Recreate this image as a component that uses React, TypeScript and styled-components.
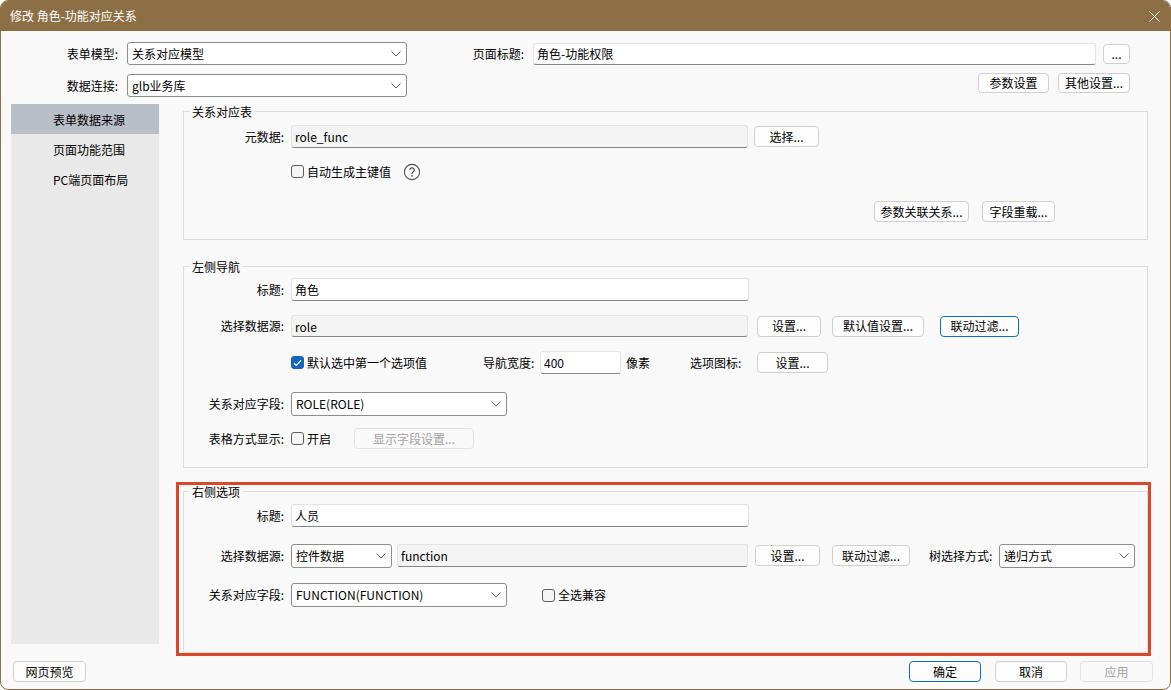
import React from 'react';
import styled, { createGlobalStyle } from 'styled-components';

const GlobalStyle = createGlobalStyle`
	* {
		box-sizing: border-box;
	}
	html,
	body {
		margin: 0;
		padding: 0;
		background: #ffffff;
	}
	body {
		font-family: 'Noto Sans CJK SC', 'Noto Sans', sans-serif;
		font-size: 12px;
		color: #000;
	}
`;

const Window = styled.div`
	width: 1171px;
	height: 690px;
	display: flex;
	flex-direction: column;
	background: #f9f9f9;
	border: 1px solid #8c6f45;
	border-radius: 8px;
	overflow: hidden;
`;

const TitleBar = styled.div`
	height: 30px;
	flex-shrink: 0;
	display: flex;
	align-items: center;
	justify-content: space-between;
	padding: 0 10px 0 9px;
	background: #8c6f45;
	color: #fff;
	line-height: 16px;
`;

const Body = styled.div`
	flex: 1;
	display: flex;
	flex-direction: column;
	min-height: 0;
`;

const TopRow = styled.div<{ $mt: number; $h: number }>`
	display: flex;
	align-items: center;
	height: ${(p) => p.$h}px;
	margin-top: ${(p) => p.$mt}px;
	padding-right: 40px;
`;

const TopLabel = styled.label`
	width: 117px;
	margin-right: 9px;
	text-align: right;
	flex-shrink: 0;
	line-height: 16px;
	white-space: nowrap;
`;

const TopButtons = styled.div`
	align-self: flex-start;
	display: flex;
	gap: 9px;
	margin-left: auto;
`;

const Main = styled.div`
	flex: 1;
	display: flex;
	align-items: flex-start;
	margin-top: 6px;
	padding-left: 10px;
	min-height: 0;
`;

const Nav = styled.ul`
	width: 148px;
	height: 540px;
	flex-shrink: 0;
	margin: 0;
	padding: 0;
	list-style: none;
	background: #e9e9e9;
`;

const NavItem = styled.li<{ $active?: boolean }>`
	height: 30px;
	display: flex;
	align-items: center;
	padding-left: 42px;
	background: ${(p) => (p.$active ? '#b9bfc8' : 'transparent')};
	cursor: pointer;
`;

const Content = styled.div`
	width: 965px;
	margin-left: 24px;
	display: flex;
	flex-direction: column;
`;

const Group = styled.section<{ $h: number; $mt: number }>`
	position: relative;
	height: ${(p) => p.$h}px;
	margin-top: ${(p) => p.$mt}px;
	border: 1px solid #dcdcdc;
`;

const Legend = styled.span`
	position: absolute;
	top: -8px;
	left: 6px;
	padding: 0 2px;
	line-height: 16px;
	background: #f9f9f9;
`;

const Highlight = styled.div`
	position: absolute;
	top: -10px;
	left: -8px;
	right: -4px;
	bottom: -4px;
	border: 3px solid #d9482b;
	pointer-events: none;
`;

const Row = styled.div<{ $mt: number; $h: number; $pl?: number }>`
	display: flex;
	align-items: center;
	height: ${(p) => p.$h}px;
	margin-top: ${(p) => p.$mt}px;
	padding-left: ${(p) => p.$pl || 0}px;
`;

const FieldLabel = styled.label`
	width: 100px;
	margin-right: 7px;
	flex-shrink: 0;
	text-align: right;
	line-height: 16px;
	white-space: nowrap;
`;

const Text = styled.span<{ $ml?: number; $w?: number }>`
	flex-shrink: 0;
	margin-left: ${(p) => p.$ml || 0}px;
	width: ${(p) => (p.$w ? `${p.$w}px` : 'auto')};
	line-height: 16px;
	white-space: nowrap;
`;

const TextBox = styled.input<{ $w?: number; $h?: number; $ml?: number; $ro?: boolean; $grow?: boolean }>`
	flex: ${(p) => (p.$grow ? '1' : '0 0 auto')};
	width: ${(p) => (p.$w ? `${p.$w}px` : 'auto')};
	min-width: 0;
	height: ${(p) => p.$h || 23}px;
	margin: 0 0 0 ${(p) => p.$ml || 0}px;
	padding: 0 3px;
	font-family: inherit;
	font-size: 12px;
	color: #000;
	background: ${(p) => (p.$ro ? '#f4f4f4' : '#ffffff')};
	border: 1px solid #e3e3e3;
	border-bottom-color: #868686;
	border-radius: 3px;
	outline: none;
`;

const SelectBox = styled.div<{ $w: number; $h?: number; $ml?: number }>`
	flex-shrink: 0;
	width: ${(p) => p.$w}px;
	height: ${(p) => p.$h || 24}px;
	margin-left: ${(p) => p.$ml || 0}px;
	display: flex;
	align-items: center;
	justify-content: space-between;
	padding: 0 5px 0 4px;
	background: #fff;
	border: 1px solid #8d8d8d;
	border-radius: 3px;
	line-height: 16px;
	white-space: nowrap;

	svg {
		flex-shrink: 0;
	}
`;

const Button = styled.button<{ $w: number; $h?: number; $ml?: number; $focus?: boolean }>`
	flex-shrink: 0;
	width: ${(p) => p.$w}px;
	height: ${(p) => p.$h || 21}px;
	margin-left: ${(p) => p.$ml || 0}px;
	padding: 0;
	font-family: inherit;
	font-size: 12px;
	line-height: 16px;
	color: #000;
	background: #fdfdfd;
	border: 1px solid ${(p) => (p.$focus ? '#0f6cc4' : '#d0d0d0')};
	border-radius: 4px;
	white-space: nowrap;
	cursor: pointer;

	&:disabled {
		color: #a3a3a3;
		background: #f9f9f9;
		border-color: #e2e2e2;
		cursor: default;
	}
`;

const CheckItem = styled.label<{ $w?: number; $ml?: number }>`
	flex-shrink: 0;
	display: flex;
	align-items: center;
	gap: 3px;
	width: ${(p) => (p.$w ? `${p.$w}px` : 'auto')};
	margin-left: ${(p) => p.$ml || 0}px;
	line-height: 16px;
	white-space: nowrap;
`;

const Box = styled.span<{ $checked?: boolean }>`
	width: 13px;
	height: 13px;
	display: flex;
	align-items: center;
	justify-content: center;
	border: 1px solid ${(p) => (p.$checked ? '#1466c2' : '#5d5d5d')};
	border-radius: 3px;
	background: ${(p) => (p.$checked ? '#1466c2' : '#f5f5f5')};
`;

const Footer = styled.div`
	height: 21px;
	margin-bottom: 7px;
	flex-shrink: 0;
	display: flex;
	align-items: center;
	padding: 0 17px 0 12px;
`;

const FooterRight = styled.div`
	display: flex;
	margin-left: auto;
`;

const Chevron = () => (
	<svg width="10" height="6" viewBox="0 0 10 6">
		<polyline points="0.5,0.5 5,5 9.5,0.5" fill="none" stroke="#606060" strokeWidth="1" />
	</svg>
);

const Check = ({ checked }: { checked?: boolean }) => (
	<Box $checked={checked}>
		{checked ? (
			<svg width="9" height="8" viewBox="0 0 9 8">
				<polyline points="1,4.2 3.3,6.4 8,1.4" fill="none" stroke="#fff" strokeWidth="1.3" />
			</svg>
		) : null}
	</Box>
);

const HelpIcon = () => (
	<svg width="18" height="18" viewBox="0 0 18 18" style={{ marginLeft: 12 }}>
		<circle cx="9" cy="9" r="7.6" fill="none" stroke="#4d4d4d" strokeWidth="1.1" />
		<path d="M6.8 7.1a2.2 2.2 0 1 1 3.2 1.9c-.7.4-1 .8-1 1.6v.5" fill="none" stroke="#4d4d4d" strokeWidth="1.2" />
		<circle cx="9" cy="12.9" r="0.8" fill="#4d4d4d" />
	</svg>
);

const CloseIcon = () => (
	<svg width="11" height="11" viewBox="0 0 11 11">
		<path d="M0.5 0.5L10.5 10.5M10.5 0.5L0.5 10.5" stroke="#fff" strokeWidth="1" />
	</svg>
);

function App() {
	return (
		<>
			<GlobalStyle />
			<Window>
				<TitleBar>
					<span>修改 角色-功能对应关系</span>
					<CloseIcon />
				</TitleBar>
				<Body>
					<TopRow $mt={11} $h={23}>
						<TopLabel>表单模型:</TopLabel>
						<SelectBox $w={280} $h={23}>
							<span>关系对应模型</span>
							<Chevron />
						</SelectBox>
						<TopLabel>页面标题:</TopLabel>
						<TextBox $grow $h={22} readOnly value="角色-功能权限" />
						<Button $w={27} $h={20} $ml={7}>
							...
						</Button>
					</TopRow>
					<TopRow $mt={8} $h={25}>
						<TopLabel>数据连接:</TopLabel>
						<SelectBox $w={280} $h={23}>
							<span>glb业务库</span>
							<Chevron />
						</SelectBox>
						<TopButtons>
							<Button $w={71} $h={20}>
								参数设置
							</Button>
							<Button $w={72} $h={20}>
								其他设置...
							</Button>
						</TopButtons>
					</TopRow>

					<Main>
						<Nav>
							<NavItem $active>表单数据来源</NavItem>
							<NavItem>页面功能范围</NavItem>
							<NavItem>PC端页面布局</NavItem>
						</Nav>

						<Content>
							<Group $h={129} $mt={7}>
								<Legend>关系对应表</Legend>
								<Row $mt={13} $h={23}>
									<FieldLabel>元数据:</FieldLabel>
									<TextBox $w={457} $ro readOnly value="role_func" />
									<Button $w={65} $ml={6}>
										选择...
									</Button>
								</Row>
								<Row $mt={12} $h={23}>
									<FieldLabel />
									<CheckItem>
										<Check />
										自动生成主键值
									</CheckItem>
									<HelpIcon />
								</Row>
								<Row $mt={18} $h={21} $pl={690}>
									<Button $w={95}>参数关联关系...</Button>
									<Button $w={73} $ml={13}>
										字段重载...
									</Button>
								</Row>
							</Group>

							<Group $h={202} $mt={26}>
								<Legend>左侧导航</Legend>
								<Row $mt={11} $h={23}>
									<FieldLabel>标题:</FieldLabel>
									<TextBox $w={458} readOnly value="角色" />
								</Row>
								<Row $mt={14} $h={22}>
									<FieldLabel>选择数据源:</FieldLabel>
									<TextBox $w={457} $h={22} $ro readOnly value="role" />
									<Button $w={64} $ml={9}>
										设置...
									</Button>
									<Button $w={92} $ml={11}>
										默认值设置...
									</Button>
									<Button $w={79} $ml={16} $focus>
										联动过滤...
									</Button>
								</Row>
								<Row $mt={14} $h={23}>
									<FieldLabel />
									<CheckItem $w={192}>
										<Check checked />
										默认选中第一个选项值
									</CheckItem>
									<Text $w={57}>导航宽度:</Text>
									<TextBox $w={81} readOnly value="400" />
									<Text $ml={5} $w={64}>
										像素
									</Text>
									<Text $w={67}>选项图标:</Text>
									<Button $w={71}>设置...</Button>
								</Row>
								<Row $mt={18} $h={24}>
									<FieldLabel>关系对应字段:</FieldLabel>
									<SelectBox $w={216}>
										<span>ROLE(ROLE)</span>
										<Chevron />
									</SelectBox>
								</Row>
								<Row $mt={11} $h={23}>
									<FieldLabel>表格方式显示:</FieldLabel>
									<CheckItem $w={63}>
										<Check />
										开启
									</CheckItem>
									<Button $w={120} disabled>
										显示字段设置...
									</Button>
								</Row>
							</Group>

							<Group $h={162} $mt={23}>
								<Legend>右侧选项</Legend>
								<Row $mt={12} $h={23}>
									<FieldLabel>标题:</FieldLabel>
									<TextBox $w={458} readOnly value="人员" />
								</Row>
								<Row $mt={16} $h={25}>
									<FieldLabel>选择数据源:</FieldLabel>
									<SelectBox $w={101}>
										<span>控件数据</span>
										<Chevron />
									</SelectBox>
									<TextBox $w={351} $ml={5} $ro readOnly value="function" />
									<Button $w={65} $ml={7}>
										设置...
									</Button>
									<Button $w={78} $ml={12}>
										联动过滤...
									</Button>
									<Text $ml={19} $w={70}>
										树选择方式:
									</Text>
									<SelectBox $w={136}>
										<span>递归方式</span>
										<Chevron />
									</SelectBox>
								</Row>
								<Row $mt={15} $h={24}>
									<FieldLabel>关系对应字段:</FieldLabel>
									<SelectBox $w={216}>
										<span>FUNCTION(FUNCTION)</span>
										<Chevron />
									</SelectBox>
									<CheckItem $ml={35}>
										<Check />
										全选兼容
									</CheckItem>
								</Row>
								<Highlight />
							</Group>
						</Content>
					</Main>

					<Footer>
						<Button $w={73}>网页预览</Button>
						<FooterRight>
							<Button $w={72} $focus>
								确定
							</Button>
							<Button $w={72} $ml={14}>
								取消
							</Button>
							<Button $w={73} $ml={13} disabled>
								应用
							</Button>
						</FooterRight>
					</Footer>
				</Body>
			</Window>
		</>
	);
}

export default App;
